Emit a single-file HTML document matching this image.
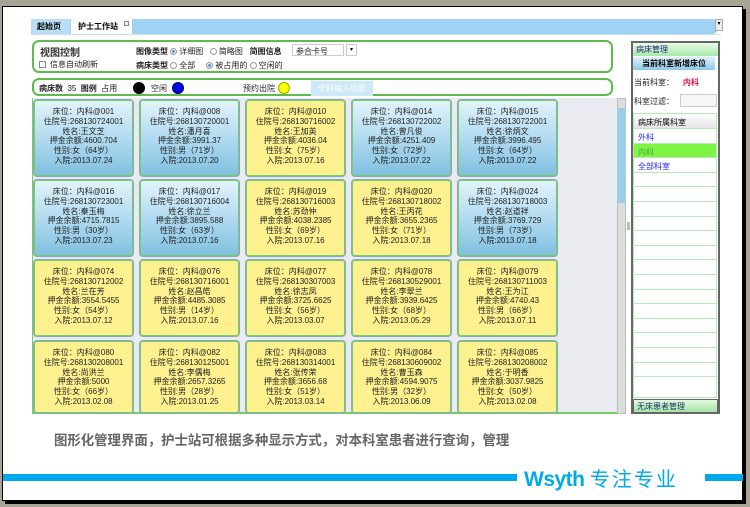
<!DOCTYPE html>
<html><head><meta charset="utf-8"><style>
*{margin:0;padding:0;box-sizing:border-box}
body{width:750px;height:507px;background:#a8a494;position:relative;overflow:hidden;font-family:"Liberation Sans","Noto Sans CJK SC",sans-serif}
.frame{position:absolute;left:2px;top:6px;width:741px;height:495px;background:#fff;border:1px solid #000;box-shadow:3px 3px 0 #000}
.abs{position:absolute}
.tabbar{left:31px;top:19px;width:687px;height:15px;background:#9fd3f6;border-radius:0 6px 6px 0;border-right:1px solid #8c8}
.tab{font-size:8px;font-weight:bold;line-height:15px;top:19px;height:15px}
.panel{border:2px solid #5fba4f;border-radius:7px;background:#fff}
.t8{font-size:8px;color:#222;white-space:nowrap}
.radio{display:inline-block;width:7px;height:7px;border:1px solid #999;border-radius:50%;vertical-align:-1px;margin-right:2px}
.radio.on{background:radial-gradient(#4a8ed8 35%,#eee 45%)}
.card{position:absolute;width:101px;border:1px solid #8ab;border-radius:4px;font-size:8px;line-height:9.8px;text-align:center;color:#222;padding-top:7px;box-shadow:0 0 0 1px #7c6 inset}
.b{background:linear-gradient(#e3f4fb,#a8d6ee 60%,#7fbfe0)}
.y{background:#fdf08e}
.list div{height:14.6px;border-bottom:1px solid #b7e8b7}
</style></head><body>
<div class="frame"></div>
<div class="abs tabbar"></div>
<div class="abs tab" style="left:31px;width:39px;background:#b8def6;padding-left:6px">起始页</div>
<div class="abs tab" style="left:71px;width:61px;background:#fff;padding-left:7px">护士工作站</div>
<div class="abs" style="left:124px;top:21px;width:5px;height:5px;border:1px solid #888;background:#eee"></div>
<div class="abs" style="left:715px;top:19px;width:8px;height:12px;background:#eee;border:1px solid #aaa;font-size:6px;text-align:center">▾</div>
<div class="abs" style="left:31px;top:34px;width:690px;height:1px;background:#cde"></div>

<div class="abs panel" style="left:32px;top:40px;width:581px;height:33px"></div>
<div class="abs" style="left:40px;top:44px;font-size:10px;font-weight:bold;color:#333">视图控制</div>
<div class="abs t8" style="left:39px;top:59px"><span style="display:inline-block;width:7px;height:7px;border:1px solid #888;vertical-align:-1px;margin-right:4px"></span>信息自动刷新</div>
<div class="abs t8" style="left:136px;top:46px"><b>图像类型</b> <span class="radio on"></span>详细图 &nbsp; <span class="radio"></span>简略图 &nbsp; <b>简图信息</b></div>
<div class="abs t8" style="left:292px;top:44px;width:52px;height:12px;border:1px solid #ccc;padding:1px 3px">参合卡号</div>
<div class="abs" style="left:346px;top:44px;width:11px;height:12px;border:1px solid #ccc;font-size:6px;text-align:center;line-height:11px">▾</div>
<div class="abs t8" style="left:136px;top:60px"><b>病床类型</b> <span class="radio"></span>全部 &nbsp;&nbsp;&nbsp; <span class="radio on"></span>被占用的 <span class="radio"></span>空闲的</div>

<div class="abs panel" style="left:32px;top:78px;width:581px;height:18px"></div>
<div class="abs t8" style="left:39px;top:83px"><b>病床数</b> &nbsp;35 &nbsp;<b>图例</b> &nbsp;占用</div>
<div class="abs" style="left:133px;top:82px;width:12px;height:12px;border-radius:50%;background:#000"></div>
<div class="abs t8" style="left:151px;top:83px">空闲</div>
<div class="abs" style="left:172px;top:82px;width:12px;height:12px;border-radius:50%;background:#0000f0;border:1px solid #005"></div>
<div class="abs t8" style="left:243px;top:83px">预约出院</div>
<div class="abs" style="left:278px;top:82px;width:12px;height:12px;border-radius:50%;background:#ff0;border:1px solid #9a0"></div>
<div class="abs t8" style="left:311px;top:81px;width:62px;height:15px;background:#cde8f6;color:#fff;text-align:center;line-height:15px">全科病人功能</div>

<div class="abs" style="left:32px;top:98px;width:585px;height:316px;background:#e9ebf0;border-left:1px solid #7c6;border-bottom:2px solid #7c6"></div>
<div class="abs" style="left:617px;top:98px;width:9px;height:316px;background:#ddd;border:1px solid #bbb"></div>
<div class="abs" style="left:617px;top:108px;width:9px;height:95px;background:#9ccde9"></div>
<div class="abs" style="left:627px;top:222px;width:3px;height:8px;background:#bbb"></div>

<div id="cards"></div>

<div class="abs" style="left:631px;top:41px;width:89px;height:373px;border:2px solid #666;background:#fff"></div>
<div class="abs" style="left:633px;top:43px;width:85px;height:13px;background:linear-gradient(#e9fbe9,#a7e8a7);font-size:8px;color:#227;padding-left:3px;line-height:13px">病床管理</div>
<div class="abs" style="left:633px;top:57px;width:82px;height:13px;background:linear-gradient(#dff2fc,#8cc8e8);font-size:8px;font-weight:bold;text-align:center;line-height:13px">当前科室新增床位</div>
<div class="abs t8" style="left:634px;top:77px">当前科室：&nbsp;&nbsp;&nbsp; <span style="color:#e01050;font-weight:bold">内科</span></div>
<div class="abs t8" style="left:634px;top:96px">科室过滤：</div>
<div class="abs" style="left:680px;top:94px;width:37px;height:13px;border:1px solid #ccc;background:#f6f6f6"></div>
<div class="abs list" style="left:633px;top:113px;width:84px;height:285px;border:1px solid #b7e8b7">
<div style="background:linear-gradient(#fff,#e4e4e4);font-size:8px;padding:3px 4px;height:15px">病床所属科室</div>
<div style="font-size:8px;color:#22f;padding:3px 4px">外科</div>
<div style="font-size:8px;color:#4a4;background:#7ef542;padding:3px 4px">内科</div>
<div style="font-size:8px;color:#22f;padding:3px 4px">全部科室</div>
<div></div><div></div><div></div><div></div><div></div><div></div><div></div><div></div><div></div><div></div><div></div><div></div><div></div><div></div>
</div>
<div class="abs" style="left:633px;top:399px;width:85px;height:14px;border:1px solid #666;background:linear-gradient(#e4fae4,#a3e4a3);font-size:8px;color:#236;padding-left:3px;line-height:13px">无床患者管理</div>

<div class="abs" style="left:54px;top:429px;font-size:13.4px;font-weight:bold;color:#666;white-space:nowrap">图形化管理界面，护士站可根据多种显示方式，对本科室患者进行查询，管理</div>
<div class="abs" style="left:3px;top:474px;width:514px;height:7px;background:#00a8ec"></div>
<div class="abs" style="left:524px;top:463px;font-size:21px;font-weight:bold;color:#00a8ec;letter-spacing:-0.5px;white-space:nowrap">Wsyth <span style="font-weight:normal;font-size:20px;letter-spacing:2px">专注专业</span></div>
<div class="abs" style="left:705px;top:474px;width:38px;height:7px;background:#00a8ec"></div>

<script>
var d=[
["001","268130724001","王文芝","4600.704","女","64","2013.07.24","b"],
["008","268130720001","潘月喜","3991.37","男","71","2013.07.20","b"],
["010","268130716002","王加英","4036.04","女","75","2013.07.16","y"],
["014","268130722002","曾凡俊","4251.409","女","72","2013.07.22","b"],
["015","268130722001","徐炳文","3996.495","女","64","2013.07.22","b"],
["016","268130723001","秦玉梅","4715.7815","男","30","2013.07.23","b"],
["017","268130716004","徐立兰","3895.588","女","63","2013.07.16","b"],
["019","268130716003","苏劲仲","4038.2385","女","69","2013.07.16","y"],
["020","268130718002","王丙花","3655.2365","女","71","2013.07.18","y"],
["024","268130718003","赵道祥","3769.729","男","73","2013.07.18","b"],
["074","268130712002","兰在芳","3554.5455","女","54","2013.07.12","y"],
["076","268130716001","赵昌皓","4485.3085","男","14","2013.07.16","y"],
["077","268130307003","徐志凤","3725.6625","女","56","2013.03.07","y"],
["078","268130529001","李翠兰","3939.6425","女","68","2013.05.29","y"],
["079","268130711003","王为江","4740.43","男","66","2013.07.11","y"],
["080","268130208001","尚洪兰","5000","女","66","2013.02.08","y"],
["082","268130125001","李儒梅","2657.3265","男","28","2013.01.25","y"],
["083","268130314001","张传荣","3656.68","女","51","2013.03.14","y"],
["084","268130609002","曹玉森","4594.9075","男","32","2013.06.09","y"],
["085","268130208002","于明香","3037.9825","女","50","2013.02.08","y"]];
var tops=[99,179,259,340],hs=[78,78,78,74],h="";
d.forEach(function(c,i){var r=Math.floor(i/5),k=i%5;
h+='<div class="card '+c[7]+'" style="left:'+(33+k*106)+'px;top:'+tops[r]+'px;height:'+hs[r]+'px">床位：内科@'+c[0]+'<br>住院号:'+c[1]+'<br>姓名:'+c[2]+'<br>押金余额:'+c[3]+'<br>性别:'+c[4]+'（'+c[5]+'岁）<br>入院:'+c[6]+'</div>';});
document.getElementById('cards').innerHTML=h;
</script>
</body></html>
